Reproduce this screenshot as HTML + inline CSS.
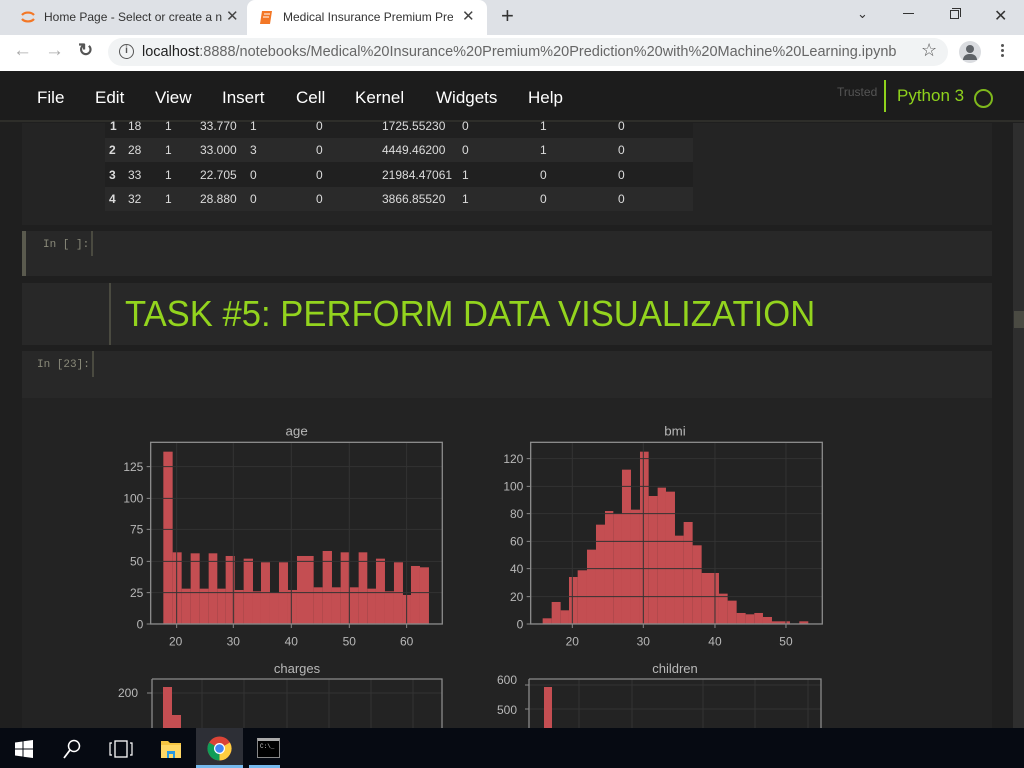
<!DOCTYPE html>
<html><head><meta charset="utf-8"><style>
*{margin:0;padding:0;box-sizing:border-box}
body{width:1024px;height:768px;overflow:hidden;background:#1f1f1f;font-family:"Liberation Sans",sans-serif;position:relative}
.a{position:absolute}
.tab{font-size:12px;color:#333;white-space:nowrap}
.menu span{position:absolute;top:88px;font-size:17px;color:#fff}
.td{position:absolute;font-size:12px;color:#dcdcdc}
.mono{font-family:"Liberation Mono",monospace;font-size:11px;color:#8a8a7a}
svg text{font-family:"Liberation Sans",sans-serif;fill:#b8b8b8}
</style></head><body>
<!-- tab bar -->
<div class="a" style="left:0;top:0;width:1024px;height:35px;background:#dee1e6"></div>
<svg class="a" style="left:19px;top:9px" width="18" height="16"><path d="M3 6 A7 5 0 0 1 15 6" stroke="#f37726" stroke-width="2.2" fill="none"/><path d="M3 10 A7 5 0 0 0 15 10" stroke="#f37726" stroke-width="2.2" fill="none"/></svg>
<div class="a tab" style="left:44px;top:10px;width:178px;overflow:hidden">Home Page - Select or create a n</div>
<div class="a" style="left:226px;top:7px;font-size:15px;color:#444">✕</div>
<div class="a" style="left:247px;top:0;width:240px;height:36px;background:#fff;border-radius:8px 8px 0 0"></div>
<svg class="a" style="left:259px;top:10px" width="14" height="15"><path d="M3 1h10l-2 13H1z" fill="#f37726"/><path d="M5 4h6M4 7h6" stroke="#fff" stroke-width="1"/></svg>
<div class="a tab" style="left:283px;top:10px;width:170px;overflow:hidden">Medical Insurance Premium Pred</div>
<div class="a" style="left:462px;top:7px;font-size:15px;color:#444">✕</div>
<div class="a" style="left:501px;top:3px;font-size:22px;color:#333">+</div>
<div class="a" style="left:857px;top:6px;font-size:13px;color:#333">&#8964;</div>
<div class="a" style="left:903px;top:13px;width:11px;height:1px;background:#333"></div>
<div class="a" style="left:950px;top:10px;width:9px;height:9px;border:1px solid #333"></div>
<div class="a" style="left:952px;top:8px;width:9px;height:9px;border-top:1px solid #333;border-right:1px solid #333"></div>
<div class="a" style="left:994px;top:6px;font-size:16px;color:#333">✕</div>
<!-- address bar -->
<div class="a" style="left:0;top:35px;width:1024px;height:36px;background:#fff"></div>
<div class="a" style="left:13px;top:40px;font-size:19px;color:#aaa">←</div>
<div class="a" style="left:45px;top:40px;font-size:19px;color:#aaa">→</div>
<div class="a" style="left:78px;top:40px;font-size:18px;color:#555;font-weight:bold">↻</div>
<div class="a" style="left:108px;top:38px;width:840px;height:28px;background:#f1f3f4;border-radius:14px"></div>
<div class="a" style="left:119px;top:44px;width:15px;height:15px;border:1.5px solid #555;border-radius:50%;font-size:10px;text-align:center;line-height:12px;color:#555;font-weight:bold">i</div>
<div class="a" style="left:142px;top:44px;font-size:14.5px;color:#222;white-space:nowrap">localhost<span style="color:#666">:8888/notebooks/Medical%20Insurance%20Premium%20Prediction%20with%20Machine%20Learning.ipynb</span></div>
<div class="a" style="left:921px;top:40px;font-size:18px;color:#555">☆</div>
<div class="a" style="left:959px;top:41px;width:22px;height:22px;border-radius:50%;background:#dadce0"></div>
<div class="a" style="left:966px;top:45px;width:8px;height:8px;border-radius:50%;background:#5f6368"></div>
<div class="a" style="left:963px;top:54px;width:14px;height:6px;border-radius:6px 6px 0 0;background:#5f6368"></div>
<div class="a" style="left:1001px;top:44px;width:3px;height:3px;background:#555;box-shadow:0 5px #555,0 10px #555;border-radius:50%"></div>
<!-- jupyter header -->
<div class="a" style="left:0;top:71px;width:1024px;height:51px;background:#1c1c1c;border-bottom:2px solid #2e2e2a"></div>
<div class="menu"><span style="left:37px">File</span><span style="left:95px">Edit</span><span style="left:155px">View</span><span style="left:222px">Insert</span><span style="left:296px">Cell</span><span style="left:355px">Kernel</span><span style="left:436px">Widgets</span><span style="left:528px">Help</span></div>
<div class="a" style="left:837px;top:85px;font-size:12px;color:#555">Trusted</div>
<div class="a" style="left:884px;top:80px;width:2px;height:32px;background:#8fd21c"></div>
<div class="a" style="left:897px;top:86px;font-size:17px;color:#8fd21c">Python 3</div>
<div class="a" style="left:974px;top:89px;width:19px;height:19px;border:2.5px solid #7fb81c;border-radius:50%"></div>
<!-- scrollbar -->
<div class="a" style="left:1013px;top:123px;width:11px;height:605px;background:#2e2e2e"></div>
<div class="a" style="left:1014px;top:311px;width:10px;height:17px;background:#4a4a42"></div>
<!-- output cell with table -->
<div class="a" style="left:22px;top:123px;width:970px;height:102px;background:#242424"></div>
<div class="a" style="left:105px;top:138px;width:588px;height:24px;background:#2a2a2a"></div>
<div class="a" style="left:105px;top:162px;width:588px;height:25px;background:#202020"></div>
<div class="a" style="left:105px;top:187px;width:588px;height:24px;background:#2a2a2a"></div>
<div class="a" style="left:105px;top:123px;width:588px;height:15px;background:#202020"></div>
<div class="td" style="left:110px;top:119px;font-weight:bold">1</div><div class="td" style="left:128px;top:119px">18</div><div class="td" style="left:165px;top:119px">1</div><div class="td" style="left:200px;top:119px">33.770</div><div class="td" style="left:250px;top:119px">1</div><div class="td" style="left:316px;top:119px">0</div><div class="td" style="left:382px;top:119px">1725.55230</div><div class="td" style="left:462px;top:119px">0</div><div class="td" style="left:540px;top:119px">1</div><div class="td" style="left:618px;top:119px">0</div>
<div class="td" style="left:109px;top:143px;font-weight:bold">2</div><div class="td" style="left:128px;top:143px">28</div><div class="td" style="left:165px;top:143px">1</div><div class="td" style="left:200px;top:143px">33.000</div><div class="td" style="left:250px;top:143px">3</div><div class="td" style="left:316px;top:143px">0</div><div class="td" style="left:382px;top:143px">4449.46200</div><div class="td" style="left:462px;top:143px">0</div><div class="td" style="left:540px;top:143px">1</div><div class="td" style="left:618px;top:143px">0</div>
<div class="td" style="left:109px;top:168px;font-weight:bold">3</div><div class="td" style="left:128px;top:168px">33</div><div class="td" style="left:165px;top:168px">1</div><div class="td" style="left:200px;top:168px">22.705</div><div class="td" style="left:250px;top:168px">0</div><div class="td" style="left:316px;top:168px">0</div><div class="td" style="left:382px;top:168px">21984.47061</div><div class="td" style="left:462px;top:168px">1</div><div class="td" style="left:540px;top:168px">0</div><div class="td" style="left:618px;top:168px">0</div>
<div class="td" style="left:109px;top:192px;font-weight:bold">4</div><div class="td" style="left:128px;top:192px">32</div><div class="td" style="left:165px;top:192px">1</div><div class="td" style="left:200px;top:192px">28.880</div><div class="td" style="left:250px;top:192px">0</div><div class="td" style="left:316px;top:192px">0</div><div class="td" style="left:382px;top:192px">3866.85520</div><div class="td" style="left:462px;top:192px">1</div><div class="td" style="left:540px;top:192px">0</div><div class="td" style="left:618px;top:192px">0</div>
<!-- empty input cell -->
<div class="a" style="left:22px;top:231px;width:970px;height:45px;background:#282828;border-left:4px solid #5a5a4e"></div>
<div class="a mono" style="left:43px;top:239px">In [ ]:</div>
<div class="a" style="left:91px;top:231px;width:2px;height:25px;background:#4a4a40"></div>
<!-- markdown -->
<div class="a" style="left:22px;top:283px;width:970px;height:62px;background:#282828"></div>
<div class="a" style="left:109px;top:283px;width:2px;height:62px;background:#4a4a40"></div>
<div class="a" style="left:125px;top:293px;font-size:36px;color:#93d41e;white-space:nowrap;transform:scaleX(0.962);transform-origin:0 0">TASK #5: PERFORM DATA VISUALIZATION</div>
<!-- code cell -->
<div class="a" style="left:22px;top:351px;width:970px;height:47px;background:#282828"></div>
<div class="a mono" style="left:37px;top:359px">In [23]:</div>
<div class="a" style="left:92px;top:351px;width:2px;height:26px;background:#4a4a40"></div>
<div class="a" style="left:22px;top:398px;width:970px;height:330px;background:#232323"></div>
<!-- charts -->
<svg class="a" style="left:0;top:0" width="1024" height="728">
<g transform="translate(100,420) scale(0.3333)">
<g fill="#c44e52">
<rect x="190" y="95" width="28" height="517"/><rect x="218" y="397" width="27" height="215"/><rect x="245" y="506" width="27" height="106"/><rect x="272" y="400" width="27" height="212"/><rect x="299" y="506" width="27" height="106"/><rect x="326" y="400" width="26" height="212"/><rect x="352" y="506" width="25" height="106"/><rect x="377" y="408" width="27" height="204"/><rect x="404" y="510" width="27" height="102"/><rect x="431" y="416" width="28" height="196"/><rect x="459" y="514" width="24" height="98"/><rect x="483" y="427" width="27" height="185"/><rect x="510" y="518" width="27" height="94"/><rect x="537" y="427" width="27" height="185"/><rect x="564" y="510" width="27" height="102"/><rect x="591" y="408" width="50" height="204"/><rect x="641" y="502" width="27" height="110"/><rect x="668" y="393" width="28" height="219"/><rect x="696" y="502" width="26" height="110"/><rect x="722" y="397" width="27" height="215"/><rect x="749" y="502" width="27" height="110"/><rect x="776" y="397" width="26" height="215"/><rect x="802" y="506" width="26" height="106"/><rect x="828" y="416" width="27" height="196"/><rect x="855" y="514" width="27" height="98"/><rect x="882" y="427" width="27" height="185"/><rect x="909" y="525" width="24" height="87"/><rect x="933" y="438" width="27" height="174"/><rect x="960" y="442" width="27" height="170"/>
</g>
<g stroke="#333" stroke-width="3"><path d="M230 67V612M400 67V612M574 67V612M748 67V612M920 67V612M152 140H1027M152 235H1027M152 328H1027M152 424H1027M152 518H1027"/></g>
<rect x="152" y="67" width="875" height="545" fill="none" stroke="#8a8a8a" stroke-width="4"/>
<g stroke="#8a8a8a" stroke-width="3"><path d="M140 612h12M140 518h12M140 424h12M140 328h12M140 235h12M140 140h12M230 612v12M400 612v12M574 612v12M748 612v12M920 612v12"/></g>
<g font-size="36" text-anchor="end"><text x="130" y="625">0</text><text x="130" y="531">25</text><text x="130" y="437">50</text><text x="130" y="341">75</text><text x="130" y="248">100</text><text x="130" y="153">125</text></g>
<g font-size="36" text-anchor="middle"><text x="227" y="677">20</text><text x="400" y="677">30</text><text x="574" y="677">40</text><text x="748" y="677">50</text><text x="920" y="677">60</text><text x="590" y="47" font-size="40">age</text></g>
</g>
<g transform="translate(480,420) scale(0.3333)">
<g fill="#c44e52">
<rect x="188" y="595" width="27" height="17"/><rect x="215" y="546" width="27" height="66"/><rect x="242" y="571" width="25" height="41"/><rect x="267" y="471" width="26" height="141"/><rect x="293" y="451" width="28" height="161"/><rect x="321" y="389" width="27" height="223"/><rect x="348" y="314" width="27" height="298"/><rect x="375" y="273" width="25" height="339"/><rect x="400" y="281" width="26" height="331"/><rect x="426" y="149" width="27" height="463"/><rect x="453" y="269" width="27" height="343"/><rect x="480" y="95" width="26" height="517"/><rect x="506" y="228" width="27" height="384"/><rect x="533" y="203" width="25" height="409"/><rect x="558" y="215" width="27" height="397"/><rect x="585" y="347" width="26" height="265"/><rect x="611" y="306" width="27" height="306"/><rect x="638" y="376" width="27" height="236"/><rect x="665" y="459" width="52" height="153"/><rect x="717" y="521" width="26" height="91"/><rect x="743" y="542" width="27" height="70"/><rect x="770" y="579" width="27" height="33"/><rect x="797" y="583" width="26" height="29"/><rect x="823" y="579" width="26" height="33"/><rect x="849" y="591" width="27" height="21"/><rect x="876" y="604" width="54" height="8"/><rect x="958" y="604" width="27" height="8"/>
</g>
<g stroke="#333" stroke-width="3"><path d="M277 67V612M490 67V612M705 67V612M918 67V612M152 116H1027M152 199H1027M152 281H1027M152 364H1027M152 446H1027M152 530H1027"/></g>
<rect x="152" y="67" width="875" height="545" fill="none" stroke="#8a8a8a" stroke-width="4"/>
<g stroke="#8a8a8a" stroke-width="3"><path d="M140 612h12M140 530h12M140 446h12M140 364h12M140 281h12M140 199h12M140 116h12M277 612v12M490 612v12M705 612v12M918 612v12"/></g>
<g font-size="36" text-anchor="end"><text x="130" y="625">0</text><text x="130" y="543">20</text><text x="130" y="459">40</text><text x="130" y="377">60</text><text x="130" y="294">80</text><text x="130" y="212">100</text><text x="130" y="129">120</text></g>
<g font-size="36" text-anchor="middle"><text x="277" y="677">20</text><text x="490" y="677">30</text><text x="705" y="677">40</text><text x="918" y="677">50</text><text x="585" y="47" font-size="40">bmi</text></g>
</g>
<!-- bottom charts -->
<text x="297" y="673" font-size="13" text-anchor="middle">charges</text>
<text x="675" y="673" font-size="13" text-anchor="middle">children</text>
<g stroke="#333"><path d="M202 679V728M244 679V728M287 679V728M329 679V728M371 679V728M413 679V728M152 693H442M579 679V728M632 679V728M703 679V728M755 679V728M808 679V728M529 685H821M529 709H821"/></g>
<rect x="163" y="687" width="9" height="41" fill="#c44e52"/><rect x="172" y="715" width="9" height="13" fill="#c44e52"/>
<rect x="544" y="687" width="8" height="41" fill="#c44e52"/>
<path d="M152 679H442V728M152 679V728M529 679H821V728M529 679V728" stroke="#8a8a8a" stroke-width="1.3" fill="none"/>
<path d="M147 693h5M525 685h4M525 709h4" stroke="#8a8a8a"/>
<text x="138" y="697" font-size="12" text-anchor="end">200</text>
<text x="517" y="684" font-size="12" text-anchor="end">600</text>
<text x="517" y="714" font-size="12" text-anchor="end">500</text>
</svg>
<!-- taskbar -->
<div class="a" style="left:0;top:728px;width:1024px;height:40px;background:#060a12"></div>
<div class="a" style="left:196px;top:728px;width:47px;height:40px;background:#2d2f36"></div>
<div class="a" style="left:196px;top:765px;width:47px;height:3px;background:#76b9ed"></div>
<div class="a" style="left:249px;top:765px;width:31px;height:3px;background:#76b9ed"></div>
<svg class="a" style="left:15px;top:740px" width="18" height="18"><path d="M0 2.5L7.5 1.5V8.5H0zM8.5 1.3L18 0V8.5H8.5zM0 9.5H7.5V16.5L0 15.5zM8.5 9.5H18V18L8.5 16.7z" fill="#fff"/></svg>
<svg class="a" style="left:62px;top:738px" width="20" height="22"><circle cx="12" cy="8" r="5.5" stroke="#fff" stroke-width="1.5" fill="none"/><path d="M8 12L2 20" stroke="#fff" stroke-width="1.8"/></svg>
<svg class="a" style="left:109px;top:740px" width="24" height="18"><rect x="6" y="1" width="12" height="16" stroke="#fff" stroke-width="1.3" fill="none"/><path d="M3 3H1V15H3M21 3H23V15H21" stroke="#fff" stroke-width="1.2" fill="none"/></svg>
<svg class="a" style="left:160px;top:739px" width="22" height="20"><path d="M1 2h7l2 2h11v15H1z" fill="#f5c542"/><path d="M1 6h20v13H1z" fill="#ffd866"/><path d="M7 19v-7h8v7h-2v-4h-4v4z" fill="#2b9ae0"/></svg>
<svg class="a" style="left:207px;top:736px" width="25" height="25"><circle cx="12.5" cy="12.5" r="12" fill="#db4437"/><path d="M12.5 12.5L2.1 6.5A12 12 0 0 0 12.5 24.5z" fill="#0f9d58"/><path d="M12.5 12.5L12.5 24.5A12 12 0 0 0 22.9 6.5z" fill="#ffcd40"/><circle cx="12.5" cy="12.5" r="5.5" fill="#fff"/><circle cx="12.5" cy="12.5" r="4.3" fill="#4285f4"/></svg>
<div class="a" style="left:257px;top:738px;width:23px;height:20px;background:#000;border:1px solid #888;border-top:3px solid #aaa"></div>
<div class="a" style="left:260px;top:743px;font-size:6px;color:#ccc;font-family:'Liberation Mono',monospace">C:\_</div>
</body></html>
